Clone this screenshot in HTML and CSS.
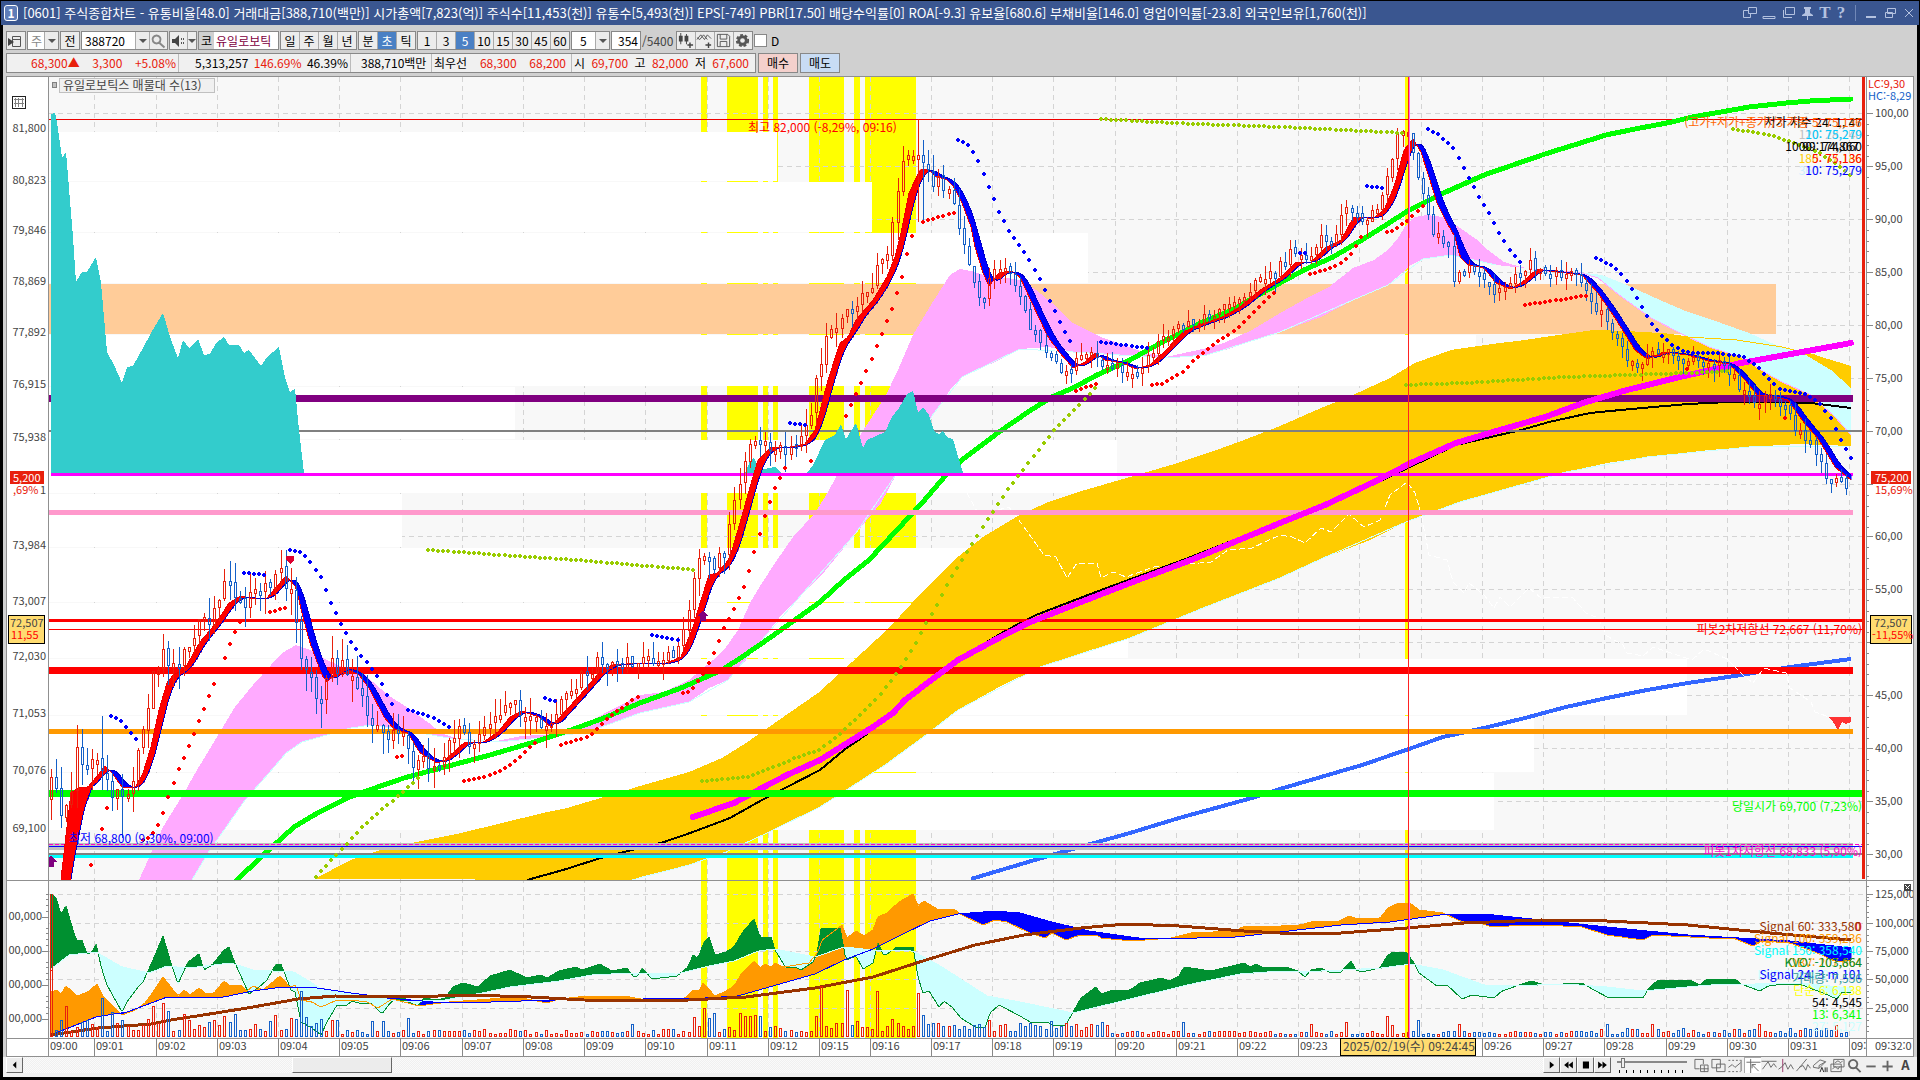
FILE: index.html
```
<!DOCTYPE html>
<html lang="ko">
<head>
<meta charset="utf-8">
<title>[0601] 주식종합차트</title>
<link rel="stylesheet" href="styles.css">
</head>
<body>
<div class="window">
  <header class="titlebar">
    <span class="badge">1</span>
    <h1 class="title">[0601] 주식종합차트 - 유통비율[48.0] 거래대금[388,710(백만)] 시가총액[7,823(억)] 주식수[11,453(천)] 유통수[5,493(천)] EPS[-749] PBR[17.50] 배당수익률[0] ROA[-9.3] 유보율[680.6] 부채비율[146.0] 영업이익률[-23.8] 외국인보유[1,760(천)]</h1>
    <div class="winbtns">
      <button aria-label="분리"><svg viewBox="0 0 14 14"><path d="M5.500 1.500h8v6h-8zM5 4.500H.5v7h7V8"/></svg></button>
      <button aria-label="내리기"><svg viewBox="0 0 14 14"><path d="M1 10.500h12v2H1z"/></svg></button>
      <button aria-label="복제"><svg viewBox="0 0 14 14"><path d="M4.500 1.500h9v7h-9zM2.500 4v7.500H11"/></svg></button>
      <button aria-label="고정"><svg viewBox="0 0 14 14"><path class="solid" d="M4 1h7v2h-1v4l3 2v1H2V9l3-2V3H4zM7 10h1v4H7z"/></svg></button>
      <button class="glyph" aria-label="글꼴">T</button>
      <button class="glyph" aria-label="도움말">?</button>
      <span class="vline"></span>
      <button aria-label="최소화"><svg viewBox="0 0 14 14"><path class="solid" d="M2 10h10v2H2z"/></svg></button>
      <button aria-label="이전 크기"><svg viewBox="0 0 14 14"><path d="M4.500 2.500h8v5h-8zM2.500 6.500h7v5h-7z"/></svg></button>
      <button aria-label="닫기"><svg viewBox="0 0 14 14"><path d="M3 3l8 8M11 3l-8 8"/></svg></button>
    </div>
  </header>

  <main class="content">
    <div class="toolbar">
      <button class="tb" aria-label="목록"><svg viewBox="0 0 16 16"><path class="ln" d="M5.500 3.500h8v10h-8zM5 6.500h9"/><path d="M1 5l6 4-6 4z"/></svg></button>
      <div class="combo c-type"><select class="muted" aria-label="종류"><option>주</option></select><span class="arr"></span></div>
      <button class="tb">전</button>
      <div class="combo c-code"><input type="text" value="388720" aria-label="종목코드"><button class="arr" aria-label="목록 열기"></button><button class="tool" aria-label="검색"><svg viewBox="0 0 16 16"><path class="ln thick" d="M6.500 2.500a4 4 0 1 0 .1 0zM9.500 10l5 4.500"/></svg></button></div>
      <div class="combo c-snd"><button class="tool" aria-label="소리"><svg viewBox="0 0 16 16"><path d="M2 6h3l4-4v12l-4-4H2z"/><path class="ln" d="M11.500 5v2M11.500 9v2M13.500 5v2M13.500 9v2"/></svg></button><button class="arr" aria-label="소리 설정"></button></div>
      <div class="name"><span class="mkt">코</span><span>유일로보틱</span></div>
      <div class="group"><button>일</button><button>주</button><button>월</button><button>년</button></div>
      <div class="group"><button>분</button><button class="on">초</button><button>틱</button></div>
      <div class="group"><button>1</button><button>3</button><button class="on">5</button><button>10</button><button>15</button><button>30</button><button>45</button><button>60</button></div>
      <div class="combo c-n"><select aria-label="주기"><option>5</option></select><span class="arr"></span></div>
      <input class="count" type="text" value="354" aria-label="봉 개수"><span class="total">/5400</span>
      <div class="group icons">
        <button aria-label="봉 추가"><svg viewBox="0 0 18 18"><path d="M2 4h4v6H2zM3.500 1h1v12h-1zM8 4h4v6H8zM9.500 2h1v11h-1zM11 13h6v1.500h-6zM13 11h1.500v6H13z"/></svg></button>
        <button aria-label="지표 추가"><svg viewBox="0 0 18 18"><path class="ln" d="M1 8l4-5 4 5 3-5 4 4M1 6l3 2 4-5 4 5"/><path d="M10 13h6v1.500h-6zM12.500 11H14v6h-1.500z"/></svg></button>
        <button aria-label="저장"><svg viewBox="0 0 18 18"><path class="ln" d="M2.500 2.500h11l2 2v11h-13zM5.500 2.500v5h7v-5M5.500 15v-5h7v5"/></svg></button>
        <button aria-label="설정"><svg viewBox="0 0 18 18"><circle class="gear" cx="9" cy="9" r="6"/><circle class="ring" cx="9" cy="9" r="4"/></svg></button>
      </div>
      <label class="chk"><input type="checkbox">D</label>
    </div>

    <div class="quote">
      <div class="cells">
        <div class="seg s1"><b>68,300▲</b><b>3,300</b><b>+5.08%</b></div>
        <div class="seg s2"><span>5,313,257</span><b>146.69%</b><span>46.39%</span></div>
        <div class="seg s3"><span>388,710백만</span></div>
        <div class="seg s4"><span>최우선</span><b>68,300</b><b>68,200</b></div>
        <div class="seg s5"><span>시</span><b>69,700</b><span>고</span><b>82,000</b><span>저</span><b>67,600</b></div>
      </div>
      <button class="buy">매수</button>
      <button class="sell">매도</button>
    </div>

    <svg class="chart" viewBox="6 76 1908 981" role="img" aria-label="유일로보틱스 5초 차트">
      <defs>
        <clipPath id="plot"><rect x="49" y="77" width="1815" height="803"/></clipPath>
        <clipPath id="sub"><rect x="49" y="881" width="1815" height="157"/></clipPath>
        <clipPath id="edge"><rect x="6" y="76" width="1907" height="981"/></clipPath>
      </defs>
      <rect x="6" y="76" width="1908" height="981" fill="#fff"/>
      <rect x="49" y="77" width="1818" height="961" fill="#f8f8f8"/>
      <g id="bands" fill="#ff0"></g>
      <g id="grid" class="grid"></g>
      <g fill="#fff">
        <rect x="49" y="132" width="728" height="49"/><rect x="49" y="182" width="823" height="50"/>
        <rect x="49" y="233" width="1039" height="50"/><rect x="49" y="284" width="1727" height="50" fill="#fc9"/>
        <rect x="49" y="335" width="1427" height="51"/><rect x="49" y="387" width="466" height="52"/>
        <rect x="49" y="440" width="1068" height="53"/><rect x="49" y="494" width="353" height="53"/>
        <rect x="49" y="548" width="1060" height="54"/><rect x="49" y="603" width="1079" height="55"/>
        <rect x="49" y="659" width="1638" height="56"/><rect x="49" y="716" width="1485" height="56"/>
        <rect x="49" y="773" width="1445" height="57"/>
      </g>
      <g clip-path="url(#plot)">
        <path fill="#fc0" d="M314 879L351 860 380 850 412 843 461 833 502 823 543 813 567 808 604 797 640 786 689 772 722 758 746 743 779 720 818 693 852 662 889 628 922 592 954 560 983 537 1016 517 1048 502 1085 490 1130 477 1171 465 1211 452 1244 440 1280 426 1321 408 1353 395 1390 378 1415 363 1451 350 1492 344 1525 340 1558 335 1594 330 1627 331 1660 333 1688 337 1737 340 1782 347 1815 355 1851 366V446L1798 444 1749 447 1709 450 1647 457 1607 463 1566 472 1509 488 1460 502 1431 512 1406 522 1370 540 1321 559 1280 578 1203 608 1130 638 1081 653 1040 667 999 687 958 710 926 735 885 765 844 792 820 807 767 833 726 852 689 865 640 877 632 880z"/>
        <path class="edge-cyan" d="M632 880L689 865 726 852 767 833 820 807 885 765 926 735 958 710 1040 667 1130 638 1203 608 1280 578 1321 559 1406 522 1460 502 1566 472 1647 457 1749 447 1851 446"/>
        <path fill="#faf" d="M139 880L163 827 184 793 197 770 220 732 235 707 253 685 271 665 282 653 296 645 310 650 327 660 347 669 363 673 373 682 388 695 408 708 429 723 441 733 461 740 496 741 522 736 571 733 592 720 640 695 664 692 689 680 713 660 724 650 738 630 750 603 762 583 777 560 793 537 815 513 828 492 836 477 862 432 885 397 898 370 913 335 934 300 950 275 960 269 971 271 987 276 1007 278 1020 280 1036 290 1052 303 1073 323 1101 337 1146 353 1166 357 1207 348 1224 343 1252 330 1280 313 1309 297 1329 287 1353 268 1374 260 1388 250 1398 238 1406 225 1415 217 1427 215 1443 217 1460 228 1476 239 1488 250 1504 262 1521 267 1549 272 1578 272 1525 268 1496 265 1476 260 1451 255 1423 259 1411 265 1388 285 1353 300 1321 317 1280 332 1232 348 1207 355 1166 358 1109 355 1073 352 1048 347 1020 349 995 362 962 377 950 390 934 413 922 435 897 473 881 503 856 533 834 560 820 577 803 593 783 613 762 640 746 660 728 680 709 688 689 702 664 708 640 713 612 723 588 732 543 738 496 742 449 738 420 733 392 728 371 725 351 728 327 735 302 742 286 753 269 773 245 800 229 823 208 853 192 880z"/>
        <path fill="#cff" d="M1578 272L1602 275 1627 285 1660 300 1688 312 1721 323 1749 333 1776 345 1806 355 1831 370 1851 388V435L1835 417 1811 395 1782 382 1766 373 1741 357 1709 347 1680 333 1651 318 1619 295 1598 278z"/>
        <path class="edge-pink" d="M1578 272L1598 278 1619 295 1651 318 1680 333 1709 347 1741 357 1766 373 1782 382 1811 395 1835 417 1851 435"/>
        <path class="edge-cyan" d="M192 880L208 853 229 823 245 800 269 773 286 753 302 742 327 735 351 728 371 725 392 728 420 733 449 738 496 742 543 738 588 732 640 713 689 702 728 680 762 640 803 593 856 533 897 473 934 413 962 377 1020 349 1073 352 1166 358 1207 355 1280 332 1353 300 1388 285 1423 259 1451 255 1496 265"/>
        <path fill="none" stroke="#fc0" d="M1660 333L1688 337 1737 340 1782 347 1815 355"/>
        <path class="white-dash" d="M967 493L979 515 1009 507 1024 527 1044 555 1056 557 1067 578 1077 563 1097 563 1101 578 1113 572 1126 577 1154 567 1211 562 1228 550 1252 548 1280 535 1292 537 1305 543 1321 528 1331 532 1349 514 1364 527 1380 520 1390 495 1407 482 1415 493 1421 513 1429 555 1447 560 1453 582 1464 593 1469 583 1484 595 1494 608 1500 597 1510 607 1529 588 1541 598 1572 597 1586 613 1598 618 1607 636 1623 645 1627 653 1643 656 1653 647 1692 660 1704 649 1727 659 1743 675"/>

        <g fill="none" class="levels">
          <path stroke="#e00" d="M49 119.500H1864"/>
          <path stroke="#000" stroke-width="2" d="M527 880L563 870 604 857 640 848 664 842 693 832 730 818 762 800 787 787 820 770 844 750 873 730 905 701 942 672 975 649 1007 630 1036 615 1101 590 1183 560 1280 522 1374 484 1456 445 1521 430 1549 422 1590 413 1631 409 1688 404 1729 402 1770 402 1811 403 1851 408"/>
          <path stroke="#36f" stroke-width="4" d="M971 879L1028 862 1069 850 1130 833 1179 818 1252 798 1280 789 1321 777 1362 765 1406 750 1443 737 1484 728 1525 718 1566 707 1607 698 1647 690 1688 683 1741 675 1790 667 1851 659"/>
          <path stroke="#0f0" stroke-width="5" d="M237 880L261 857 294 827 314 815 347 798 375 788 404 778 441 768 490 755 531 743 571 730 604 718 640 703 681 688 722 670 742 657 771 637 799 617 820 602 844 580 869 560 897 530 922 503 946 475 962 460 999 432 1028 412 1052 397 1073 388 1097 375 1130 360 1166 340 1203 322 1232 310 1280 283 1304 270 1333 257 1362 240 1386 225 1406 212 1439 195 1484 175 1513 165 1545 154 1574 145 1606 135 1635 129 1672 122 1692 117 1721 112 1749 107 1786 103 1810 101 1851 99" stroke-linecap="round"/>
          <path stroke="#800080" stroke-width="7" d="M49 398.500H1853"/>
          <path stroke="gray" stroke-width="2" d="M49 431H1864"/>
          <path stroke="#f9c" stroke-width="5" d="M49 512.500H1853"/>
          <path stroke="red" stroke-width="3" d="M49 620.500H1864"/>
          <path stroke="red" d="M49 629.500H1864"/>
          <path stroke="red" stroke-width="7" d="M49 670.500H1853"/>
          <path stroke="#f90" stroke-width="5" d="M49 731.500H1853"/>
          <path stroke="#f0f" stroke-width="6" stroke-linecap="round" d="M693 817L734 803 762 788 787 775 820 760 844 745 873 727 893 713 905 700 942 672 958 660 995 640 1028 623 1081 602 1130 583 1191 560 1280 523 1325 505 1374 482 1411 463 1456 443 1500 430 1545 417 1586 402 1627 390 1680 377 1741 363 1802 352 1851 343"/>
          <path stroke="#0f0" stroke-width="7" d="M49 793.500H1864"/>
          <path stroke="silver" stroke-width="7" d="M49 846.500H1853"/>
          <path stroke="#f0c" stroke-dasharray="4 2" d="M49 844.500H1864"/>
          <path stroke="#00f" d="M49 846.500H1864"/>
          <path stroke="gray" stroke-width="2" d="M49 854H1864"/>
          <path stroke="#0ff" stroke-width="3" d="M49 856.500H1853"/>
        </g>
        <path class="white-dash" d="M1727 659L1743 675 1753 683 1764 668 1786 673 1790 688 1811 702 1815 712 1829 717"/>

        <g class="momentum">
          <path d="M51 473V114L55 113 57 122 62 158 66 152 73 237 76 282 82 272 87 272 96 257 101 283 107 352 114 365 122 383 127 367 133 366 143 348 151 333 163 313 171 340 178 358 183 340 189 348 198 339 204 355 210 354 216 343 224 337 229 345 239 345 244 353 249 350 261 366 267 357 279 347 285 377 290 392 295 389 299 430 304 473z"/>
          <path d="M745 473L750 461 754 458 760 470 775 467 781 473z"/>
          <path d="M807 473L813 465 825 440 835 435 841 424 846 439 856 423 863 448 867 440 885 432 892 417 899 408 907 394 913 391 918 412 923 407 929 415 934 431 939 434 943 431 948 438 953 439 957 453 963 473z"/>
        </g>
        <path stroke="#f0f" stroke-width="3" d="M51 474.500H1853"/>
        <g id="ribbon"></g>
        <g id="candles" fill="none"></g>
        <g id="dots"></g>
        <path fill="#800080" d="M51 855l6 7h-3v5h-6v-5h-3zM703 610l5 6h-2v5h-6v-5h-2z"/>
        <path fill="#dc0030" d="M286 556h8v4l-4 4-4-4z"/>
        <path fill="#f33" d="M1828 717h23v5l-5 2-4-2-4 8-5-8z"/>
      </g>

      <g clip-path="url(#sub)">
        <g id="flows"></g>
        <path fill="none" stroke="#930" stroke-width="3" d="M51 1035L98 1028 151 1024 171 1020 216 1013 253 1007 298 999 335 996 408 997 469 995 531 997 584 1000 640 1001 689 1000 746 997 815 988 873 977 926 960 975 945 1024 935 1081 928 1126 924 1179 926 1244 931 1280 933 1341 933 1407 928 1464 923 1541 920 1607 921 1688 925 1770 933 1851 940"/>
        <g id="volume" fill="none"></g>
      </g>

      <g class="frame">
        <path d="M6 76.500H1914M6.500 76V1057M1913.500 76V1057M48.500 77V1057M1866.500 77V1057M7 880.500H1914M7 1038.500H1914M7 1056.500H1914"/>
      </g>
      <path stroke="#e8200c" stroke-width="3" d="M1863.500 77V879"/>
      <path stroke="#f22" d="M1408.500 77V1038"/>
      <path stroke="#f6f" d="M1409.500 77V238M1409.500 881V1038"/>
      <g id="axis" class="axis" clip-path="url(#edge)"></g>

      <rect x="59.500" y="78.500" width="155" height="14" fill="#f0f0f0" stroke="silver"/>
      <rect x="52.500" y="82.500" width="4" height="5" fill="silver" stroke="gray"/>
      <text class="t" x="63" y="90" fill="#444">유일로보틱스 매물대 수(13)</text>
      <g fill="#fff" stroke="#222"><rect x="12.500" y="96.500" width="13" height="12" stroke-width="1"/><path stroke="gray" d="M14 99.500h10M14 103.500h10M15.500 98v9M18.500 98v9M22.500 98v9"/></g>

      <g class="t">
        <text x="748" y="132" fill="red">최고 82,000 (-8,29%, 09:16)</text>
        <text x="69" y="843" fill="#00f">최저 68,800 (9,30%, 09:00)</text>
      </g>
      <g class="t r">
        <text x="1862" y="127" fill="#000">저가 지수 24:  1, 47</text>
        <text x="1862" y="127" fill="#f60">(고가+저가+종가)/3 가중 5: 75,136</text>
        <text x="1862" y="139" fill="silver">120: 28,240</text>
        <text x="1862" y="139" fill="#0cf">10: 75,279</text>
        <text x="1862" y="151" fill="#000">1000: 174,060</text>
        <text x="1859" y="151" fill="#000">99: 74,867</text>
        <text x="1862" y="163" fill="#fc0">180: 77,186</text>
        <text x="1862" y="163" fill="red">5: 75,136</text>
        <text x="1862" y="175" fill="#cef">360: 75,279</text>
        <text x="1862" y="175" fill="#00f">10: 75,279</text>
        <text x="1862" y="634" fill="red">피봇2차저항선 72,667 (11,70%)</text>
        <text x="1862" y="811" fill="#0f0">당일시가 69,700 (7,23%)</text>
        <text x="1862" y="856" fill="#f0c">피봇1차저항선 68,833 (5,90%)</text>
        <text x="1862" y="931" fill="red">0</text>
        <text x="1861" y="931" fill="#930">Signal 60: 333,580</text>
        <text x="1862" y="943" fill="#f90">Signal 100: 359,236</text>
        <text x="1862" y="955" fill="#0ff">Signal 150: 358,540</text>
        <text x="1862" y="967" fill="#f90">OBV: 207,664</text>
        <text x="1862" y="967" fill="#009030">KVO: -103,864</text>
        <text x="1862" y="979" fill="#cff">KVO Signal 24: 101</text>
        <text x="1862" y="979" fill="#00f">Signal 24: 3 m 101</text>
        <text x="1862" y="983" fill="#399">거래량: 7,556</text>
        <text x="1862" y="995" fill="#ff0">단순 6: 6,138</text>
        <text x="1862" y="1007" fill="#000">54: 4,545</text>
        <text x="1862" y="1019" fill="#0f0">13: 6,341</text>
        <text x="1862" y="1031" fill="#cff">27: 5,127</text>
      </g>

      <g class="t n">
        <rect x="10" y="471" width="34" height="13" fill="#e8200c"/><text x="13" y="482" fill="#fff">5,200</text>
        <text x="13" y="494" fill="#e8200c">,69%</text><text x="40" y="494" fill="#444">1</text>
        <rect x="8.500" y="615.500" width="36" height="28" fill="#ffdc70" stroke="#000"/>
        <text x="10" y="627" fill="#444">72,507</text><text x="11" y="639" fill="red">11,55</text>
        <rect x="1871" y="471" width="40" height="13" fill="#e8200c"/><text x="1875" y="482" fill="#fff">75,200</text>
        <text x="1875" y="494" fill="#e8200c">15,69%</text>
        <rect x="1870.500" y="615.500" width="41" height="28" fill="#ffdc70" stroke="#000"/>
        <text x="1874" y="627" fill="#444">72,507</text><text x="1872" y="639" fill="red">-11,55%</text>
        <g clip-path="url(#edge)"><text x="1868" y="88" fill="#e8200c">LC:9,30</text><text x="1868" y="100" fill="#1460c8">HC:-8,29</text></g>
        <rect x="1340.500" y="1038.500" width="135" height="17" fill="#ffdc70" stroke="#000"/>
        <text class="date" x="1343" y="1051" fill="#444">2025/02/19(수) 09:24:45</text>
      </g>
      <rect x="1904" y="884" width="7" height="7" fill="#444"/><path stroke="#fff" d="M1905.500 885.500l4 4M1909.500 885.500l-4 4"/>
    </svg>

    <div class="bottom">
      <button class="raised" aria-label="왼쪽"><svg viewBox="0 0 16 16"><path d="M10 4v8L6 8z"/></svg></button>
      <div class="track"><div class="thumb"></div></div>
      <button class="raised" aria-label="재생"><svg viewBox="0 0 16 16"><path d="M6 4v8l5-4z"/></svg></button>
      <button class="raised" aria-label="뒤로"><svg viewBox="0 0 16 16"><path d="M8 4v8L3 8zM13 4v8L8 8z"/></svg></button>
      <button class="raised" aria-label="정지"><svg viewBox="0 0 16 16"><path d="M5 4h7v8H5z"/></svg></button>
      <button class="raised" aria-label="앞으로"><svg viewBox="0 0 16 16"><path d="M3 4v8l5-4zM8 4v8l5-4z"/></svg></button>
      <input class="speed" type="range" min="0" max="100" value="6" aria-label="속도">
      <div class="tools">
        <button aria-label="창 추가"><svg viewBox="0 0 16 16"><path d="M1.500 1.500h9v5M1.500 1.500v10h5M7.500 7.500h8v7h-8zM11.500 8v7M8 11.500h8"/></svg></button>
        <button aria-label="창 복사"><svg viewBox="0 0 16 16"><path d="M1.500 1.500h9v9h-9zM6.500 6.500h9v8h-9z"/></svg></button>
        <button aria-label="차트"><svg viewBox="0 0 16 16"><path d="M1 10l4-3 3 3 6-5M14.500 2v12" /><path stroke-dasharray="2 2" d="M1 2.500h13M1 14.500h13"/></svg></button>
        <button class="on" aria-label="십자선"><svg viewBox="0 0 16 16"><path d="M1 4.500h15M5.500 1v15M7 7l7 7M7 11V7h4"/></svg></button>
        <button aria-label="추세선"><svg viewBox="0 0 16 16"><path d="M0 3.500h16M1 12l6-8 3 6 3-4 3 4"/></svg></button>
        <button aria-label="수직선"><svg viewBox="0 0 16 16"><path stroke="#936" d="M4.500 1v14"/><path d="M0 12l4-3 3-4 3 7 3-5 3 5"/></svg></button>
        <button aria-label="사선"><svg viewBox="0 0 16 16"><path d="M1 14L12 1M4 10l4-2 3 5 2-6 3 4"/></svg></button>
        <button aria-label="모두 지우기"><svg viewBox="0 0 16 16"><path d="M1 8l7-6 6 2-7 7-6-1zM7 11V8l7-4"/><path stroke="#222" d="M8 15l2-5 2 5M13.500 10v5M15.500 10v5"/></svg></button>
        <button aria-label="겹쳐보기"><svg viewBox="0 0 16 16"><path d="M4.500 1.500h11v8h-11zM1.500 6.500h11v8h-11zM3 12l3-3 3 3 2-3M6 5l3-2 3 2 2-2"/></svg></button>
        <button aria-label="돋보기"><svg viewBox="0 0 16 16"><path stroke-width="2" d="M7 2a4.500 4.500 0 1 0 .1 0zM10 10l5 5"/></svg></button>
        <button aria-label="축소"><svg viewBox="0 0 16 16"><path stroke-width="2" d="M3 9h10"/></svg></button>
        <button aria-label="확대"><svg viewBox="0 0 16 16"><path stroke-width="2" d="M2 9h11M7.500 3v11"/></svg></button>
        <button class="letter" aria-label="자동">A</button>
      </div>
    </div>
  </main>
</div>
<script src="chart.js"></script>
</body>
</html>
```
FILE: styles.css
```
* { box-sizing: border-box; }
html { background: #000; }
body {
  margin: 0;
  background: #000;
  font-family: "Noto Sans CJK KR", "Liberation Sans", sans-serif;
  font-size: 12px;
  line-height: 16px;
  color: #000;
}
button, input, select {
  font: inherit;
  color: inherit;
  margin: 0;
  padding: 0;
  border: 0;
  border-radius: 0;
  background: none;
  min-width: 0;
}
.window { padding: 1px 1px 0; }

/* title bar */
.titlebar {
  display: flex;
  align-items: center;
  height: 24px;
  padding: 0 2px 0 3px;
  gap: 5px;
  background: #3a5690;
  color: #fff;
}
.badge {
  width: 14px;
  height: 16px;
  border: 1px solid #fff;
  border-radius: 3px;
  background: #5f7db8;
  font-weight: bold;
  line-height: 14px;
  text-align: center;
}
.title {
  flex: 1;
  margin: 0;
  font-size: 13px;
  line-height: 20px;
  font-weight: normal;
  white-space: nowrap;
}
.winbtns { display: flex; align-items: center; gap: 4px; color: #b4c2e0; }
.winbtns button { width: 15px; height: 16px; }
.winbtns svg { display: block; width: 14px; height: 14px; fill: none; stroke: #b4c2e0; }
.winbtns .solid { fill: #b4c2e0; stroke: none; }
.winbtns .glyph { width: 12px; font: bold 17px/16px "Liberation Serif", serif; }
.vline { width: 1px; height: 16px; margin: 0 4px; background: #7188b8; }

/* toolbar */
.content { margin: 0 2px; padding: 0 3px; background: #d0d0d0; }
.toolbar { display: flex; gap: 1px; padding-top: 6px; height: 25px; }
.toolbar > * { flex: none; }
.toolbar svg { display: block; width: 16px; height: 16px; fill: #444; }
.toolbar .ln { fill: none; stroke: #555; }
.toolbar .thick { stroke-width: 2; stroke: #888; }
.gear { fill: none; stroke: #555; stroke-width: 2; stroke-dasharray: 3 2; }
.ring { fill: none; stroke: #555; stroke-width: 3; }
.tb, .combo, .group, .name, .count { height: 19px; border: 1px solid #888; background: #ececec; }
.tb { width: 20px; }
.combo { display: flex; }
.combo select, .combo input {
  flex: 1;
  height: 17px;
  padding-left: 3px;
  background: #fff;
  appearance: none;
}
.combo .muted { color: #888; }
.arr {
  display: grid;
  place-items: center;
  width: 14px;
  border-left: 1px solid #aaa;
  background: #ececec;
}
.arr::after { content: ""; border: 4px solid transparent; border-top-color: #555; border-bottom: 0; }
.tool { width: 18px; border-left: 1px solid #aaa; }
.c-type { width: 32px; }
.c-code { width: 87px; }
.c-snd { width: 28px; }
.c-snd .tool { border: 0; }
.c-snd .arr { width: 10px; }
.c-n { width: 39px; }
.c-n select { padding-left: 8px; }
.name { width: 81px; display: flex; gap: 2px; background: #fff; color: #800040; white-space: nowrap; line-height: 17px; }
.mkt { padding: 0 2px; background: #d0d0d0; color: #000; }
.group { display: flex; }
.group button { flex: none; width: 19px; border-left: 1px solid #aaa; text-align: center; }
.group button:first-child { width: 18px; border-left: 0; }
.group .on { background: #4a80c4; color: #fff; }
.icons svg { width: 17px; height: 17px; }
.count { width: 30px; padding-left: 6px; background: #fff; }
.total { width: 33px; padding-top: 2px; color: #444; }
.chk { display: flex; align-items: center; gap: 4px; height: 19px; }
.chk input { width: 13px; height: 13px; appearance: none; background: #fff; border: 1px solid #888; }

/* quote strip */
.quote { display: flex; gap: 2px; padding: 3px 0; height: 26px; }
.cells { display: flex; width: 750px; border: 1px solid #888; background: #f0f0f0; line-height: 18px; white-space: nowrap; }
.quote b { font-weight: normal; color: #e8200c; }
.seg { display: flex; justify-content: space-between; border-right: 1px solid #bbb; }
.seg:last-child { border: 0; }
.s1 { width: 172px; padding: 0 2px 0 24px; }
.s2 { width: 172px; padding: 0 2px 0 16px; }
.s3 { width: 81px; padding: 0 1px 0 10px; }
.s4 { width: 140px; padding: 0 5px 0 2px; }
.s5 { flex: 1; padding: 0 6px 0 2px; }
.buy, .sell { width: 40px; height: 20px; border: 1px solid #888; background: #f4d0cc; }
.sell { background: #c8dcf4; }

/* chart */
.chart { display: block; width: 100%; height: auto; shape-rendering: crispEdges; }
.t { font-size: 12px; }
.n { font-size: 11px; }
.r { text-anchor: end; }
.chart .date { font-size: 12px; }
.grid { stroke: #d4d4d4; stroke-dasharray: 5 4; fill: none; }
.frame { stroke: #909090; fill: none; }
.axis { font-size: 11px; fill: #444; }
.axis path { stroke: #888; fill: none; }
.axis .end { text-anchor: end; }
.momentum { fill: #3cc; }
.edge-pink { fill: none; stroke: #faf; }
.edge-cyan { fill: none; stroke: #cff; }
.white-dash { fill: none; stroke: #fff; stroke-dasharray: 6 3; }
.up { stroke: #e8200c; }
.down { stroke: #1460c8; }

/* bottom strip */
.bottom { display: flex; height: 20px; padding-bottom: 4px; margin: 0 -3px; padding-left: 3px; padding-right: 3px; background: #f0f0f0; }
.raised { width: 17px; border: 1px solid; border-color: #fff #666 #666 #fff; background: #ececec; }
.raised svg { display: block; width: 15px; height: 14px; }
.track { flex: 1; padding-left: 269px; background: repeating-conic-gradient(#f0f0f0 0 25%, #fafafa 0 50%) 0 0 / 2px 2px; }
.thumb { width: 100px; height: 16px; border: 1px solid; border-color: #fff #666 #666 #fff; background: #ececec; }
.speed {
  width: 70px;
  height: 16px;
  margin: 0 6px;
  appearance: none;
  background:
    linear-gradient(#888, #888) 0 4px / 100% 2px no-repeat,
    repeating-linear-gradient(90deg, #000 0 1px, transparent 1px 7px) 2px 13px / 100% 3px no-repeat;
}
.speed::-webkit-slider-thumb { appearance: none; width: 4px; height: 10px; margin-top: -5px; border: 1px solid #777; background: #f0f0f0; }
.tools { display: flex; }
.tools button { width: 17px; height: 16px; }
.tools .on { background: #fff; border: 1px solid #aaa; border-width: 1px 0 0 1px; }
.tools svg { display: block; width: 16px; height: 15px; fill: none; stroke: #666; }
.tools .letter { font-weight: bold; font-size: 13px; color: #444; }
```
FILE: chart.js
```
const NS = 'http://www.w3.org/2000/svg';
const byId = id => document.getElementById(id);
function add(parent, tag, attrs, text) {
  const el = document.createElementNS(NS, tag);
  for (const k in attrs) el.setAttribute(k, attrs[k]);
  if (text !== undefined) el.textContent = text;
  parent.appendChild(el);
  return el;
}
const pts = s => s.trim().split(/\s+/).map(p => p.split(',').map(Number));
function at(series, x) {
  if (x <= series[0][0]) return series[0][1];
  for (let i = 1; i < series.length; i++) {
    const [x1, y1] = series[i];
    if (x <= x1) {
      const [x0, y0] = series[i - 1];
      return x1 === x0 ? y1 : y0 + (y1 - y0) * (x - x0) / (x1 - x0);
    }
  }
  return series[series.length - 1][1];
}
let seed = 388720;
const rnd = () => (seed = (seed * 16807) % 2147483647) / 2147483647;

/* signal bands */
for (const [x, w] of [[701, 6], [727, 31], [763, 5], [773, 5], [809, 35], [854, 6], [865, 51], [1405, 4]])
  add(byId('bands'), 'rect', { x, y: 77, width: w, height: 961 });

/* grid and axes */
const grid = byId('grid'), axis = byId('axis');
const times = [94, 156, 217, 278, 339, 400, 462, 523, 584, 645, 707, 768, 819, 870, 931, 992, 1053, 1115, 1176, 1237, 1298, 1359, 1421, 1482, 1543, 1604, 1666, 1727, 1788, 1849];
const names = '09:01 09:02 09:03 09:04 09:05 09:06 09:07 09:08 09:09 09:10 09:11 09:12 09:15 09:16 09:17 09:18 09:19 09:20 09:21 09:22 09:23 . 09:25 09:26 09:27 09:28 09:29 09:30 09:31 09:'.split(' ');
add(axis, 'text', { x: 50, y: 1050 }, '09:00');
times.forEach((x, i) => {
  add(grid, 'path', { d: `M${x + .5} 77V1038` });
  add(axis, 'path', { d: `M${x + .5} 1038V1056` });
  if (x < 1340 || x > 1476) add(axis, 'text', { x: x + 2, y: 1050 }, names[i]);
});
add(axis, 'text', { x: 1875, y: 1050 }, '09:32:0');
for (let p = 100, i = 0; p >= 30; p -= 5, i++) {
  const y = Math.round(113 + i * 52.93) + .5;
  add(grid, 'path', { d: `M49 ${y}H1864` });
  add(axis, 'path', { d: `M1867 ${y}h6` });
  for (let k = 1; k < 5; k++) add(axis, 'path', { d: `M1867 ${Math.round(y + k * 10.6) + .5}h2` });
  if (p !== 65 && p !== 50) add(axis, 'text', { x: 1875, y: y + 3 }, p + ',00');
}
['125,000', '100,000', '75,000', '50,000', '25,000'].forEach((t, i) => {
  const y = [894, 923, 951, 979, 1008][i] + .5;
  add(grid, 'path', { d: `M49 ${y}H1864` });
  add(axis, 'path', { d: `M1867 ${y}h6M1867 ${y + 6}h2M1867 ${y + 12}h2M1867 ${y + 18}h2M1867 ${y + 23}h2` });
  add(axis, 'text', { x: 1875, y: y + 3 }, t);
});
[917, 951, 985, 1019].forEach(y => {
  add(axis, 'path', { d: `M42 ${y + .5}h7M46 ${y - 5.5}h3M46 ${y - 11.5}h3M46 ${y - 17.5}h3M46 ${y - 22.5}h3` });
  add(axis, 'text', { x: 42, y: y + 3, class: 'end' }, '00,000');
});
[['81,800', 128], ['80,823', 180], ['79,846', 230], ['78,869', 281], ['77,892', 332], ['76,915', 384], ['75,938', 437], ['73,984', 545], ['73,007', 601], ['72,030', 656], ['71,053', 713], ['70,076', 770], ['69,100', 828]]
  .forEach(([t, y]) => add(axis, 'text', { x: 46, y: y + 4, class: 'end' }, t));

/* filled area between two series, coloured by which one is on top */
function between(parent, a, b, x0, x1, upFill, downFill) {
  let up = '', down = '';
  for (let x = x0; x < x1; x += 1) {
    const a0 = a(x), a1 = a(x + 1), b0 = b(x), b1 = b(x + 1);
    const q = `M${x} ${a0.toFixed(1)}L${x + 1} ${a1.toFixed(1)} ${x + 1} ${b1.toFixed(1)} ${x} ${b0.toFixed(1)}z`;
    if (a0 + a1 < b0 + b1) up += q; else down += q;
  }
  add(parent, 'path', { d: up, fill: upFill, stroke: upFill, 'stroke-width': .5 });
  add(parent, 'path', { d: down, fill: downFill, stroke: downFill, 'stroke-width': .5 });
}
function line(parent, f, x0, x1, attrs) {
  let d = 'M';
  for (let x = x0; x <= x1; x += 2) d += `${x} ${f(x).toFixed(1)} `;
  add(parent, 'path', Object.assign({ d, fill: 'none' }, attrs));
}

/* moving average ribbon */
const fastPts = pts(`61,879 67,827 71,793 78,788 88,787 98,775 105,766 112,773 122,787 135,788 143,773 151,747 159,710 167,683 173,675 184,670 200,642 216,623 229,603 241,596 253,599 267,598 278,585 286,576 296,587 302,613 310,643 322,675 327,682 335,673 345,668 359,675 369,688 384,717 394,729 408,733 420,753 437,763 445,760 465,742 482,743 498,732 510,717 522,711 539,717 551,727 559,718 580,695 600,672 612,665 640,663 664,664 681,657 693,627 701,600 709,575 717,573 726,563 730,557 740,523 752,480 758,460 771,447 787,448 805,444 815,430 828,380 840,343 848,337 856,320 873,300 887,277 895,257 901,233 909,193 920,170 928,169 936,177 946,179 954,187 962,203 971,227 975,247 983,273 989,286 999,273 1011,271 1020,277 1032,303 1048,337 1060,353 1073,368 1085,362 1095,353 1105,360 1122,363 1136,369 1150,365 1166,350 1183,332 1199,325 1220,318 1240,307 1260,290 1280,278 1296,262 1311,262 1325,248 1341,240 1353,218 1362,217 1372,219 1384,210 1394,187 1404,150 1413,139 1421,152 1429,177 1437,203 1447,223 1455,237 1460,257 1468,265 1484,268 1496,283 1511,289 1525,280 1537,269 1549,271 1566,273 1582,275 1598,293 1615,318 1635,350 1647,359 1664,352 1688,355 1709,361 1729,364 1745,380 1758,396 1770,395 1788,400 1802,420 1819,440 1835,467 1851,480`);
const slowStart = pts('61,910 71,879 75,855 84,810 92,787 98,782 105,773');
const fast = x => at(fastPts, x);
const slow = x => {
  if (x < 105) return at(slowStart, x);
  let s = 0;
  for (let k = 0; k <= 8; k++) s += fast(x - k * 1.6);
  return s / 9;
};
const ribbon = byId('ribbon');
between(ribbon, fast, slow, 61, 1851, '#f00', '#00f');
line(ribbon, fast, 61, 1851, { stroke: '#e00' });
line(ribbon, slow, 71, 1851, { stroke: '#00c' });

/* candles */
const STEP = 5.1, COUNT = 353;
const candles = byId('candles'), volume = byId('volume');
const spikes = { 51: 66, 66: 30, 102: 38, 112: 24, 153: 30, 163: 33, 168: 25, 184: 22, 214: 16, 224: 20, 234: 22, 276: 21, 291: 18, 301: 45, 306: 19, 321: 17, 372: 15, 382: 15, 408: 18, 633: 12, 693: 19, 703: 28, 709: 18, 714: 23, 739: 23, 744: 20, 749: 20, 754: 21, 760: 20, 816: 20, 821: 50, 846: 46, 856: 15, 878: 45, 893: 17, 918: 43, 923: 21, 933: 13, 939: 13, 990: 16, 1005: 12, 1030: 13, 1051: 15, 1101: 14, 1184: 14, 1310: 12, 1347: 14, 1387: 20, 1392: 11, 1418: 16, 1459: 12, 1607: 12, 1653: 12, 1760: 12, 1837: 11 };
const spikeAt = x => { for (const k in spikes) if (Math.abs(k - x) < 2.6) return spikes[k]; return 0; };
let prev = 800;
for (let i = 0; i < COUNT; i++) {
  const x = Math.round(51 + i * STEP) + .5;
  const wild = x < 460 ? 14 : x < 960 ? 11 : 8;
  const lead = fast(x + 5);
  let y = x < 72 ? 800 + (rnd() - .5) * 50
    : lead + (lead - slow(x + 2)) * .8 + (rnd() - .5) * wild * 1.5;
  y = Math.max(y, 132);
  const open = prev, up = y < open || (Math.abs(y - open) < 2 && rnd() > .5);
  const top = Math.round(Math.min(open, y)), bottom = Math.max(Math.round(Math.max(open, y)), top + 5);
  let hi = Math.round(top - rnd() * wild * 1.6), lo = Math.round(bottom + rnd() * wild * 1.6);
  if (Math.abs(x - 918) < 2.6) { hi = 119; lo = 222; }
  if (Math.abs(x - 923) < 2.6) { hi = 140; lo = 221; }
  if (Math.abs(x - 286) < 2.6) hi = 550;
  if (Math.abs(x - 102) < 2.6) hi = 716;
  if (Math.abs(x - 321) < 2.6) lo = 728;
  if (Math.abs(x - 122) < 2.6) lo = 838;
  const cls = up ? 'up' : 'down';
  add(candles, 'path', { class: cls, d: `M${x} ${hi}V${top}M${x} ${bottom}V${lo}M${x - 1} ${top + .5}h2V${bottom - .5}h-2z` });
  prev = y + (rnd() - .5) * 4;

  const base = x < 340 ? 13 : x < 690 ? 5 : x < 1110 ? 10 : x > 1600 ? 6 : 4;
  const h = Math.max(2, Math.round(spikeAt(x) || base * (.35 + rnd())));
  add(volume, 'path', { class: cls, d: `M${x - 1} ${1036.5 - h}h2V1036.5h-2z` });
}
add(volume, 'path', { class: 'up', d: 'M50.5 894V1036M52.5 894V1036' });

/* stop-and-reverse dots */
const dotRuns = [
  ['#00f', `111,716 122,721 127,728 137,740`], ['#00f', `244,573 265,575`],
  ['#00f', `290,550 300,552 306,556 311,563 321,578 331,603 341,624 351,642 362,657 367,663 377,676 382,684 387,695 392,704`],
  ['#00f', `408,710 429,716 449,727`], ['#00f', `545,698 555,701`], ['#00f', `652,635 678,640`], ['#00f', `790,423 805,425`],
  ['#00f', `958,140 969,145 979,162 989,188 999,212 1009,231 1020,246 1030,261 1040,280 1050,301 1060,322 1071,343`],
  ['#00f', `1101,342 1147,348`], ['#00f', `1367,186 1382,188`], ['#00f', `1300,253 1305,253`],
  ['#00f', `1428,129 1438,134 1453,147 1463,167 1469,178 1479,197 1489,213 1499,232 1509,249 1520,262`],
  ['#00f', `1596,258 1611,265 1622,274 1632,289 1642,307 1651,323 1662,336 1673,345 1683,351 1692,353 1719,353 1744,357 1759,368 1770,380 1780,389 1790,391 1805,394 1821,404 1831,419 1841,440 1851,458`],
  ['red', `91,865 91,865`], ['red', `102,829 107,808`],
  ['red', `143,840 148,838 153,833 158,826 163,814 168,798 178,771 188,748 198,724 209,697 219,673 229,646 239,622`],
  ['red', `270,612 285,608`], ['red', `397,757 402,756`], ['red', `464,781 484,777 504,769 520,757 535,743`],
  ['red', `561,745 588,737 608,718 637,697`],
  ['red', `683,693 688,692 693,688 703,675 714,652 724,628 734,609 744,588 749,572 754,553 765,515 775,487 785,468`],
  ['red', `811,461 811,461`],
  ['red', `846,416 856,394 862,381 872,358 882,333 892,309 902,277 907,255 913,233`],
  ['red', `923,222 953,213`], ['red', `1076,391 1096,384`],
  ['red', `1152,385 1162,384 1173,378 1183,372 1193,361 1203,353 1213,345 1234,331 1254,312 1275,292`],
  ['red', `1310,274 1326,270 1341,263 1351,254 1361,237`], ['red', `1387,232 1392,231 1407,221 1418,211 1423,206`],
  ['red', `1525,305 1590,295`], ['red', `1687,369 1687,369`], ['red', `1785,418 1785,418`],
  ['#9c0', `428,550 575,560 697,570`], ['#9c0', `316,877 341,850 361,828 392,801 418,778`],
  ['#9c0', `702,781 748,777 775,766 795,758 820,750 836,737 856,719 877,698 897,673 907,658 918,640 928,620 938,602 948,583 958,566 964,557 989,517 1009,488 1030,461 1054,430 1071,413 1081,403 1096,387`],
  ['#9c0', `1101,119 1171,123 1280,127 1402,133`], ['#9c0', `1406,385 1464,383 1566,377 1688,373 1729,371`],
  ['#9c0', `1733,129 1770,135 1800,145 1819,153 1839,166 1851,176`]
];
for (const [fill, s] of dotRuns) {
  const run = pts(s), last = run[run.length - 1][0];
  let d = '';
  for (let x = run[0][0]; x <= last + 1; x += STEP) {
    const px = Math.round(x), py = Math.round(at(run, x));
    d += `M${px - 1} ${py - 2}h2v1h1v2h-1v1h-2v-1h-1v-2h1z`;
  }
  add(byId('dots'), 'path', { d, fill });
}

/* lower panel oscillators */
const kvo = pts(`51,894 56,898 61,914 66,906 76,940 82,940 87,954 92,952 96,944 102,970 107,985 122,1012 127,1002 138,987 143,982 153,960 163,936 171,963 178,984 188,962 199,954 204,970 212,965 224,950 229,947 235,963 249,994 259,987 267,980 276,964 281,964 291,990 295,992 301,1022 312,1028 321,1035 327,1022 337,1005 347,1005 352,1001 359,1003 371,1003 382,1014 390,1003 402,995 408,1002 418,1006 424,998 437,1000 445,998 453,987 463,983 478,987 490,976 510,970 527,978 541,975 547,978 559,971 576,967 582,970 600,964 612,971 627,968 633,976 638,976 642,968 652,979 677,976 688,967 693,955 698,958 704,942 709,937 715,955 726,952 734,947 742,933 754,919 760,937 771,937 775,950 786,968 795,967 801,970 813,962 817,953 821,929 840,928 846,960 856,956 863,969 873,963 878,943 883,954 887,954 897,947 913,947 918,977 923,993 929,991 939,1007 944,1001 952,1007 961,1018 975,1027 985,1028 990,1013 999,1005 1020,1016 1032,1023 1048,1022 1052,1025 1066,1025 1073,1012 1081,998 1096,987 1101,994 1113,990 1130,990 1140,983 1162,978 1169,981 1179,976 1184,967 1211,971 1232,966 1244,963 1250,967 1256,964 1264,968 1286,967 1298,971 1305,977 1311,970 1321,968 1331,973 1341,972 1351,961 1356,970 1362,972 1380,968 1387,956 1393,952 1407,953 1414,963 1419,973 1437,986 1447,985 1462,999 1472,995 1494,998 1502,991 1531,981 1545,985 1582,983 1594,990 1607,997 1643,998 1649,988 1658,980 1690,980 1700,985 1707,979 1735,979 1741,984 1760,991 1768,986 1784,984 1802,985 1823,993 1837,999 1842,992 1851,992`);
const kvoSig = pts(`51,969 69,955 96,952 122,967 149,973 167,966 188,968 231,963 253,970 294,972 322,989 367,995 402,1002 445,1000 482,993 510,987 559,981 592,975 629,973 677,974 709,966 734,961 758,951 775,949 815,957 844,947 873,950 913,951 942,967 987,996 1020,1002 1073,1013 1130,999 1187,985 1240,974 1280,971 1321,971 1382,968 1411,964 1443,970 1484,985 1509,986 1566,984 1607,987 1643,991 1709,985 1798,983 1851,988`);
const obv = pts(`51,992 57,990 61,994 66,986 77,996 88,992 97,984 103,996 122,1015 135,1010 145,1003 153,992 163,977 178,996 184,990 190,995 199,988 206,994 214,993 224,981 229,985 241,985 247,991 253,986 263,990 280,976 290,987 296,985 301,1000 312,1002 321,1007 337,1000 351,1000 367,1002 378,1008 392,999 408,1003 418,1006 433,1004 449,1002 490,999 510,997 527,999 547,1003 559,999 588,996 624,996 640,999 681,1001 688,995 693,990 699,991 703,983 715,996 726,991 734,986 742,973 754,961 760,968 765,964 771,967 775,963 783,967 809,963 818,952 822,940 842,925 847,938 856,931 864,936 873,930 878,917 887,913 899,902 913,894 918,906 924,901 939,910 954,909 962,915 983,925 995,920 1007,922 1030,933 1045,938 1052,933 1066,940 1077,936 1097,935 1101,938 1132,941 1171,938 1191,933 1236,931 1242,927 1280,926 1300,925 1311,922 1339,921 1349,916 1358,919 1380,918 1388,908 1396,904 1410,903 1419,910 1443,913 1460,921 1480,923 1492,927 1525,925 1545,925 1582,927 1607,935 1643,940 1653,935 1709,938 1733,938 1753,946 1762,941 1790,943 1815,952 1837,962 1851,960`);
const obvSig = pts(`51,1035 96,1017 127,1012 167,997 224,997 253,991 282,987 318,988 351,993 400,999 433,1002 490,1002 551,1000 640,999 705,998 738,996 762,989 815,974 844,960 873,949 901,935 930,921 958,914 995,911 1020,913 1052,922 1089,931 1138,938 1195,938 1236,937 1280,932 1341,925 1390,922 1447,914 1484,914 1541,920 1607,927 1688,935 1790,941 1851,948`);
const f = s => x => at(s, x);
const flows = byId('flows');
between(flows, f(obv), f(obvSig), 51, 1851, '#f90', '#00f');
between(flows, f(kvo), f(kvoSig), 51, 1851, '#009030', '#cff');
line(flows, f(kvo), 51, 1851, { stroke: '#009030' });
line(flows, f(kvoSig), 51, 1851, { stroke: '#cff' });
line(flows, f(obv), 51, 1851, { stroke: '#f90' });
line(flows, f(obvSig), 51, 1851, { stroke: '#00f', 'stroke-width': 1 });
```
